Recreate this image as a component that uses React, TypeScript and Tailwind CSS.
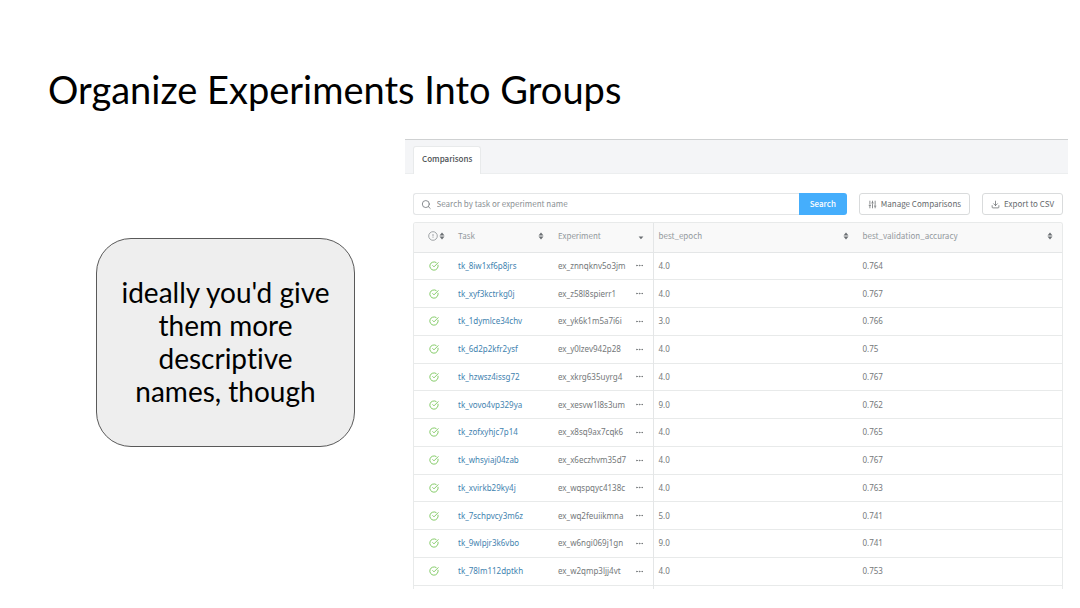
import { CircleCheckBig, Download, Ellipsis, Search, SlidersVertical } from "lucide-react"

type Run = {
  task: string
  experiment: string
  epoch: string
  accuracy: string
}

const runs: Run[] = [
  { task: "tk_8iw1xf6p8jrs", experiment: "ex_znnqknv5o3jm", epoch: "4.0", accuracy: "0.764" },
  { task: "tk_xyf3kctrkg0j", experiment: "ex_z58l8spierr1", epoch: "4.0", accuracy: "0.767" },
  { task: "tk_1dymlce34chv", experiment: "ex_yk6k1m5a7i6i", epoch: "3.0", accuracy: "0.766" },
  { task: "tk_6d2p2kfr2ysf", experiment: "ex_y0lzev942p28", epoch: "4.0", accuracy: "0.75" },
  { task: "tk_hzwsz4issg72", experiment: "ex_xkrg635uyrg4", epoch: "4.0", accuracy: "0.767" },
  { task: "tk_vovo4vp329ya", experiment: "ex_xesvw1l8s3um", epoch: "9.0", accuracy: "0.762" },
  { task: "tk_zofxyhjc7p14", experiment: "ex_x8sq9ax7cqk6", epoch: "4.0", accuracy: "0.765" },
  { task: "tk_whsyiaj04zab", experiment: "ex_x6eczhvm35d7", epoch: "4.0", accuracy: "0.767" },
  { task: "tk_xvirkb29ky4j", experiment: "ex_wqspqyc4138c", epoch: "4.0", accuracy: "0.763" },
  { task: "tk_7schpvcy3m6z", experiment: "ex_wq2feuiikmna", epoch: "5.0", accuracy: "0.741" },
  { task: "tk_9wlpjr3k6vbo", experiment: "ex_w6ngi069j1gn", epoch: "9.0", accuracy: "0.741" },
  { task: "tk_78lm112dptkh", experiment: "ex_w2qmp3ljj4vt", epoch: "4.0", accuracy: "0.753" },
]

function SortIcon() {
  return (
    <svg viewBox="0 0 6 8" className="h-2 w-[6px] shrink-0" fill="#6b6f73">
      <path d="M3 0.6 5.5 3.4H0.5Z" />
      <path d="M3 7.4 5.5 4.6H0.5Z" />
    </svg>
  )
}

function SortedDownIcon() {
  return (
    <svg viewBox="0 0 6 8" className="h-2 w-[6px] shrink-0" fill="#6b6f73">
      <path d="M3 7.2 5.4 4.6H0.6Z" />
    </svg>
  )
}

function StatusIcon() {
  return (
    <svg viewBox="0 0 20 20" className="size-[10px] shrink-0" fill="none" stroke="#8b9094" strokeWidth="1.6">
      <circle cx="10" cy="10" r="8.6" />
      <path d="M10 6v5M10 12.5v1.5" />
    </svg>
  )
}

function HeaderButton({ label, sorted }: { label: string; sorted?: boolean }) {
  return (
    <button className="flex w-full items-center justify-between pr-[9px] pl-[5px]">
      {label}
      {sorted ? <SortedDownIcon /> : <SortIcon />}
    </button>
  )
}

function ComparisonsTable() {
  return (
    <div className="mt-[7px] overflow-hidden rounded-t-[3px] border border-b-0 border-[#e8eaea]">
      <table className="h-[366px] w-full table-fixed border-collapse text-left text-[8px] leading-3">
        <colgroup>
          <col className="w-[39px]" />
          <col className="w-[100px]" />
          <col className="w-[100px]" />
          <col />
          <col />
        </colgroup>
        <thead className="bg-[#f9f9f9] font-['Noto_Sans_CJK_SC',sans-serif] text-[#92989c]">
          <tr className="h-[29px] border-b border-[#e4e6e7]">
            <th className="pb-[2px] font-normal">
              <button aria-label="Status" className="flex items-center gap-px pl-[14px]">
                <StatusIcon />
                <SortIcon />
              </button>
            </th>
            <th className="pb-[2px] font-normal">
              <HeaderButton label="Task" />
            </th>
            <th className="pb-[2px] font-normal">
              <HeaderButton label="Experiment" sorted />
            </th>
            <th className="border-l border-[#e4e6e7] pb-[2px] font-normal">
              <HeaderButton label="best_epoch" />
            </th>
            <th className="pb-[2px] font-normal">
              <HeaderButton label="best_validation_accuracy" />
            </th>
          </tr>
        </thead>
        <tbody className="font-['Noto_Sans',sans-serif] text-[#74787a]">
          {runs.map((run) => (
            <tr key={run.task} className="border-b border-[#e8eaea]">
              <td className="pl-[15px]">
                <CircleCheckBig className="size-[10px] text-[#6cc04a]" />
              </td>
              <td className="pl-[5px]">
                <a href="#" className="text-[#3f83af]">
                  {run.task}
                </a>
              </td>
              <td>
                <div className="flex items-center justify-between pr-[9px] pl-[5px]">
                  {run.experiment}
                  <button aria-label="More" className="flex">
                    <Ellipsis className="size-[9px]" strokeWidth={2.5} />
                  </button>
                </div>
              </td>
              <td className="border-l border-[#e4e6e7] pl-[5px]">{run.epoch}</td>
              <td className="pl-[5px]">{run.accuracy}</td>
            </tr>
          ))}
          <tr className="h-1">
            <td colSpan={3} />
            <td className="border-l border-[#e4e6e7]" />
            <td />
          </tr>
        </tbody>
      </table>
    </div>
  )
}

function ComparisonsPanel() {
  return (
    <section className="min-w-0 flex-1 border-t border-[#cfd1d2] font-['Noto_Sans_CJK_SC',sans-serif] text-[8px] leading-3">
      <div className="flex border-b border-[#eceeef] bg-[#f4f5f7] pt-[6px] pl-2">
        <button className="-mb-px h-7 rounded-t-[3px] border border-b-0 border-[#e8eaeb] bg-white px-2 pb-1 font-medium text-[#4c5053]">
          Comparisons
        </button>
      </div>

      <div className="pt-[19px] pr-[5px] pl-2">
        <div className="flex h-[22px] gap-3">
          <form className="flex flex-1">
            <label className="flex flex-1 items-center gap-[5px] rounded-l-[3px] border border-r-0 border-[#e4e6e7] pl-[7px]">
              <Search className="size-[11px] text-[#7b8084]" strokeWidth={2} />
              <input
                type="text"
                aria-label="Search"
                placeholder="Search by task or experiment name"
                className="w-full outline-none placeholder:text-[#8b9094]"
              />
            </label>
            <button type="button" className="w-12 rounded-r-[3px] bg-[#45aefc] font-medium text-white">
              Search
            </button>
          </form>
          <button className="flex items-center gap-1 rounded-[3px] border border-[#d9dbdc] px-2 text-[#65696c]">
            <SlidersVertical className="size-[9px]" />
            Manage Comparisons
          </button>
          <button className="flex items-center gap-1 rounded-[3px] border border-[#d9dbdc] px-2 text-[#65696c]">
            <Download className="size-[9px]" />
            Export to CSV
          </button>
        </div>
        <ComparisonsTable />
      </div>
    </section>
  )
}

export default function App() {
  return (
    <main className="min-h-screen bg-white">
      <h1 className="px-12 pt-[65px] font-['Lato',sans-serif] text-[38px] leading-12 text-black">
        Organize Experiments Into Groups
      </h1>
      <div className="mt-[26px] flex items-start pr-3 pl-24">
        <aside className="mt-[99px] mr-[50px] flex h-[209px] w-[259px] shrink-0 items-center justify-center rounded-[35px] border border-[#595959] bg-[#eeeeee] px-5 pb-[2px]">
          <p className="text-center font-['Lato',sans-serif] text-[28px] leading-[33px] text-black [font-variant-ligatures:none]">
            ideally you'd give them more descriptive names, though
          </p>
        </aside>
        <ComparisonsPanel />
      </div>
    </main>
  )
}
